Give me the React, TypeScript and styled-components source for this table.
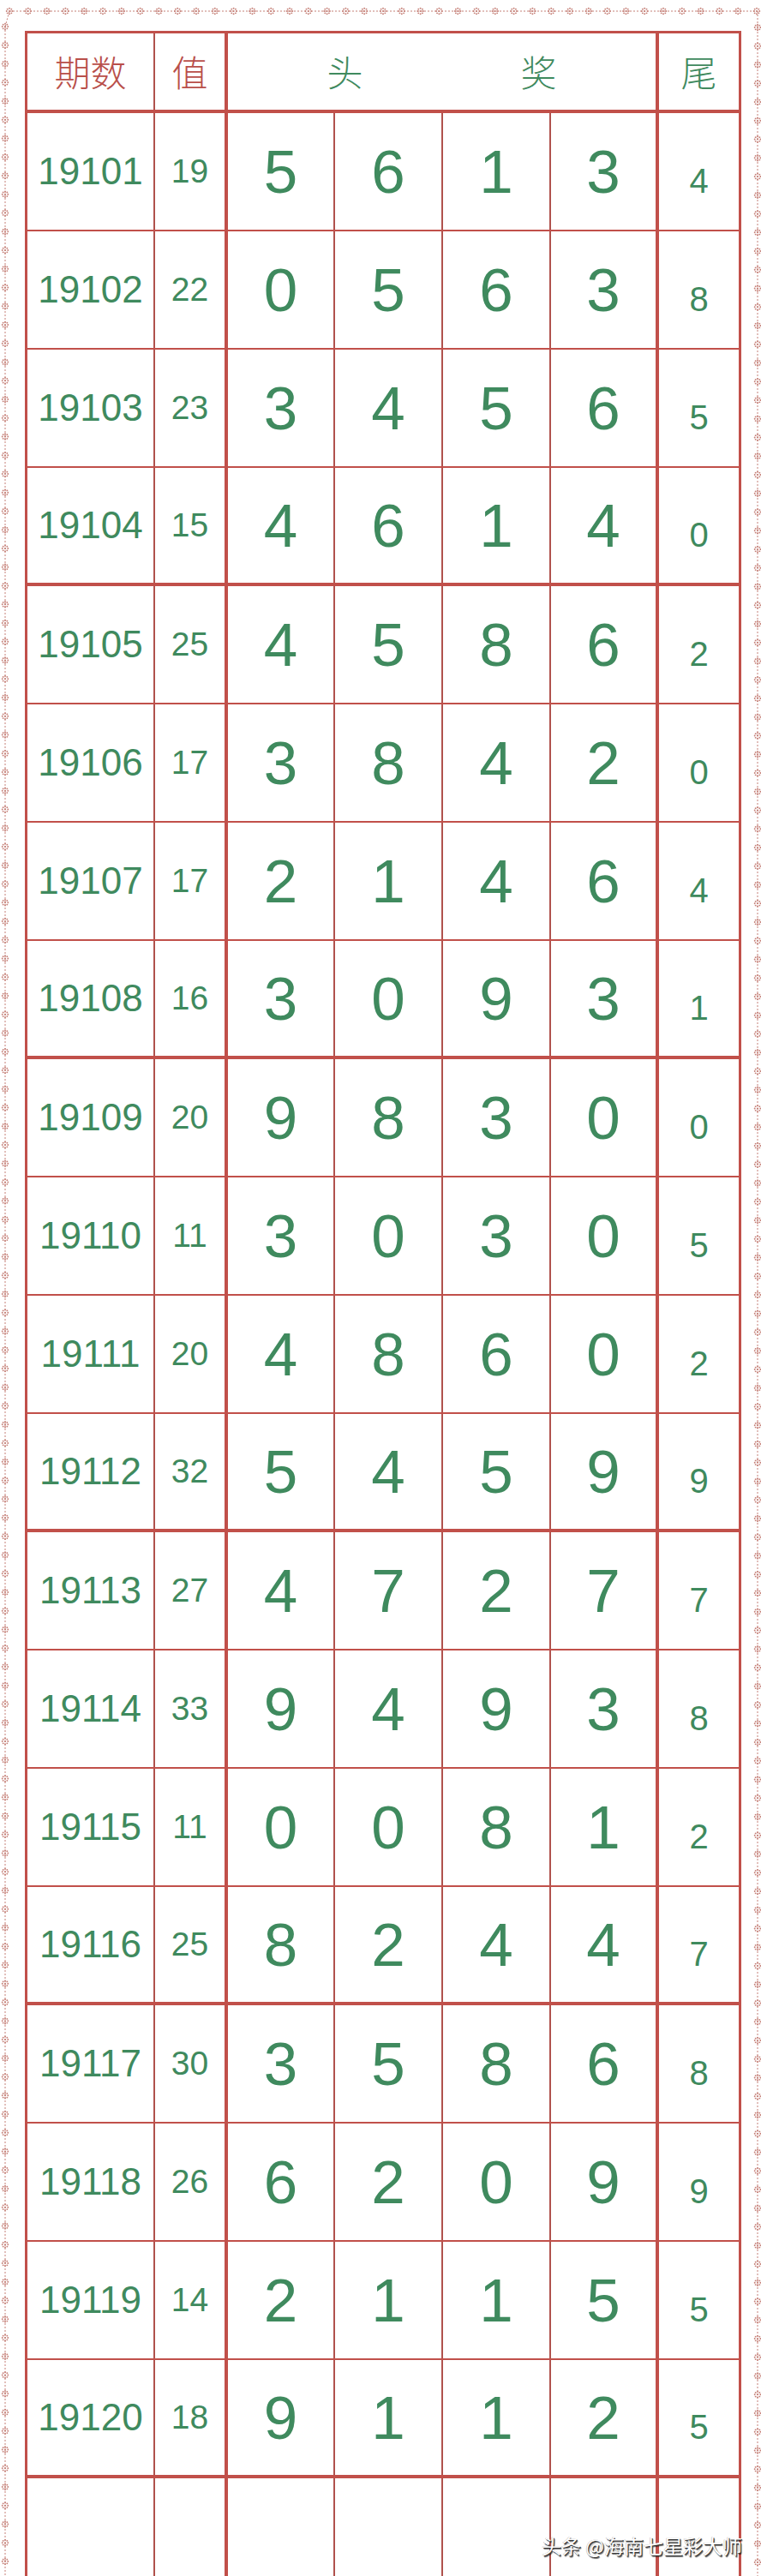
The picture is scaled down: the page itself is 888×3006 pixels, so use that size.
import React from 'react';
import styled, { createGlobalStyle } from 'styled-components';

const RED = '#c1504a';
const THIN = '#b0524d';
const GREEN = '#3f8a5e';
const DOT = '#c58078';

const GlobalStyle = createGlobalStyle`
  html, body {
    margin: 0;
    padding: 0;
    background: #ffffff;
  }
  body {
    width: 888px;
    height: 3006px;
    overflow: hidden;
  }
`;

const Page = styled.div`
  position: relative;
  width: 888px;
  height: 3006px;
  overflow: hidden;
  box-sizing: border-box;
  padding: 36px 23px 0 29px;
  background: #ffffff;
`;

const Decoration = styled.svg`
  position: absolute;
  left: 0;
  top: 0;
  pointer-events: none;
`;

const Table = styled.div`
  display: flex;
  flex-direction: column;
  width: 836px;
  box-sizing: border-box;
  border: 3px solid ${RED};
  border-bottom: none;
`;

const COLS = '149px 85px 125px 126px 126px 126px 93px';

const HeaderRow = styled.div`
  display: grid;
  grid-template-columns: 149px 85px 503px 93px;
  height: 93px;
  box-sizing: border-box;
  border-bottom: 4px solid ${RED};
`;

const Row = styled.div<{ $thick?: boolean }>`
  display: grid;
  grid-template-columns: ${COLS};
  height: 138px;
  flex-shrink: 0;
  box-sizing: border-box;
  border-bottom: ${(p) => (p.$thick ? `4px solid ${RED}` : `2px solid ${RED}`)};
`;

const Cell = styled.div<{ $edge?: 'thin' | 'thick' | 'none' }>`
  display: flex;
  align-items: center;
  justify-content: center;
  box-sizing: border-box;
  color: ${GREEN};
  font-family: 'Liberation Sans', Arial, sans-serif;
  border-right: ${(p) =>
    p.$edge === 'thick' ? `4px solid ${RED}` : p.$edge === 'none' ? 'none' : `2px solid ${THIN}`};
`;

const HeadCell = styled(Cell)<{ $red?: boolean }>`
  font-family: 'Noto Sans CJK SC', 'Noto Sans', sans-serif;
  font-weight: 300;
  font-size: 42px;
  color: ${(p) => (p.$red ? '#b94f4a' : GREEN)};
  gap: 184px;
  padding-bottom: 2px;
`;

const PeriodCell = styled(Cell)`
  font-size: 44px;
`;

const ValueCell = styled(Cell)`
  font-size: 39px;
`;

const DigitCell = styled(Cell)`
  font-size: 71px;
`;

const TailCell = styled(Cell)`
  font-size: 40px;
  padding-top: 22px;
`;

const Watermark = styled.div`
  position: absolute;
  right: 22px;
  top: 2959px;
  font-family: 'Noto Sans CJK SC', 'Noto Sans', sans-serif;
  font-size: 23px;
  line-height: 1;
  color: #ffffff;
  text-shadow: 1px 1px 0 #3a3a3a, 1.5px 1.5px 1px rgba(0, 0, 0, 0.6), -0.5px -0.5px 0 rgba(0, 0, 0, 0.35);
  white-space: nowrap;
`;

const draws = [
  ['19101', '19', '5613', '4'],
  ['19102', '22', '0563', '8'],
  ['19103', '23', '3456', '5'],
  ['19104', '15', '4614', '0'],
  ['19105', '25', '4586', '2'],
  ['19106', '17', '3842', '0'],
  ['19107', '17', '2146', '4'],
  ['19108', '16', '3093', '1'],
  ['19109', '20', '9830', '0'],
  ['19110', '11', '3030', '5'],
  ['19111', '20', '4860', '2'],
  ['19112', '32', '5459', '9'],
  ['19113', '27', '4727', '7'],
  ['19114', '33', '9493', '8'],
  ['19115', '11', '0081', '2'],
  ['19116', '25', '8244', '7'],
  ['19117', '30', '3586', '8'],
  ['19118', '26', '6209', '9'],
  ['19119', '14', '2115', '5'],
  ['19120', '18', '9112', '5'],
];

// small flower used along the dotted frame
const Motif = ({ x, y }: { x: number; y: number }) => (
  <g transform={`translate(${x} ${y})`} fill={DOT}>
    {[0, 45, 90, 135, 180, 225, 270, 315].map((a) => (
      <circle
        key={a}
        cx={3.3 * Math.cos((a * Math.PI) / 180)}
        cy={3.3 * Math.sin((a * Math.PI) / 180)}
        r={0.95}
      />
    ))}
    <circle r={1.1} />
  </g>
);

const Frame = () => {
  const top: number[] = [];
  for (let x = 11; x < 888; x += 21.8) top.push(x);
  const side: number[] = [];
  for (let y = 31; y < 3006; y += 21.75) side.push(y);
  return (
    <Decoration width={888} height={3006} viewBox="0 0 888 3006">
      <g stroke={DOT} strokeWidth={1} strokeDasharray="2 2" fill="none">
        <line x1={11} y1={13} x2={884} y2={13} />
        <line x1={6} y1={31} x2={6} y2={3006} />
        <line x1={884} y1={13} x2={884} y2={3006} />
        <line x1={6} y1={31} x2={11} y2={13} />
      </g>
      {top.map((x) => (
        <Motif key={`t${x}`} x={x} y={13} />
      ))}
      {side.map((y) => (
        <Motif key={`l${y}`} x={6} y={y} />
      ))}
      {side.map((y) => (
        <Motif key={`r${y}`} x={884} y={y + 1} />
      ))}
    </Decoration>
  );
};

export default function App() {
  return (
    <>
      <GlobalStyle />
      <Page>
        <Frame />
        <Table>
          <HeaderRow>
            <HeadCell $red>期数</HeadCell>
            <HeadCell $red $edge="thick">值</HeadCell>
            <HeadCell $edge="thick">
              <span>头</span>
              <span>奖</span>
            </HeadCell>
            <HeadCell $edge="none">尾</HeadCell>
          </HeaderRow>
          {draws.map(([period, value, digits, tail], i) => (
            <Row key={period} $thick={i % 4 === 3}>
              <PeriodCell>{period}</PeriodCell>
              <ValueCell $edge="thick">{value}</ValueCell>
              {digits.split('').map((d, j) => (
                <DigitCell key={j} $edge={j === 3 ? 'thick' : 'thin'}>
                  {d}
                </DigitCell>
              ))}
              <TailCell $edge="none">{tail}</TailCell>
            </Row>
          ))}
          <Row>
            <PeriodCell />
            <ValueCell $edge="thick" />
            <DigitCell />
            <DigitCell />
            <DigitCell />
            <DigitCell $edge="thick" />
            <TailCell $edge="none" />
          </Row>
        </Table>
        <Watermark>头条 @海南七星彩大师</Watermark>
      </Page>
    </>
  );
}
